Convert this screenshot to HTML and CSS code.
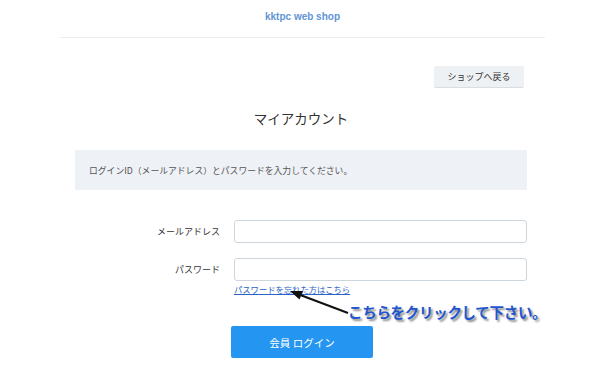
FILE: index.html
```html
<!DOCTYPE html>
<html lang="ja">
<head>
<meta charset="utf-8">
<link rel="stylesheet" href="styles.css">
</head>
<body>
<header class="site-header">
  <a class="shop-name" href="#">kktpc web shop</a>
</header>
<main class="account">
  <div class="back-row">
    <button class="back-btn">ショップへ戻る</button>
  </div>
  <h1 class="title">マイアカウント</h1>
  <div class="notice">ログインID（メールアドレス）とパスワードを入力してください。</div>
  <form class="login-form">
    <div class="row">
      <label class="label">メールアドレス</label>
      <input class="field" type="text">
    </div>
    <div class="row row-pass">
      <label class="label">パスワード</label>
      <div class="field-col">
        <input class="field" type="password">
        <a class="forgot" href="#">パスワードを忘れた方はこちら</a>
      </div>
    </div>
    <div class="submit-row">
      <button class="login-btn" type="button">会員 ログイン</button>
    </div>
  </form>
  <div class="annotation">
    <svg class="arrow" width="64" height="28" viewBox="0 0 64 28">
      <line x1="60" y1="24" x2="11" y2="5.5" stroke="#111" stroke-width="2"/>
      <polygon points="2,2 15,2 11.5,10.5" fill="#111"/>
    </svg>
    <span class="note">こちらをクリックして下さい。</span>
  </div>
</main>
</body>
</html>
```
FILE: styles.css
```css
html, body {
  margin: 0;
  padding: 0;
  background: #fff;
  font-family: "Noto Sans CJK JP", "Noto Sans", sans-serif;
  color: #333;
}
.site-header {
  margin: 0 55px 0 60px;
  height: 37px;
  border-bottom: 1px solid #ececec;
  display: flex;
  align-items: center;
  justify-content: center;
}
.shop-name {
  font-family: "Liberation Sans", Arial, sans-serif;
  font-weight: bold;
  font-size: 10px;
  color: #6294d4;
  text-decoration: none;
  margin-top: -4px;
}
.account {
  position: relative;
  width: 452px;
  margin: 0 0 0 75px;
}
.back-row {
  display: flex;
  justify-content: flex-end;
  padding: 28px 3px 0 0;
}
.back-btn {
  width: 90px;
  height: 22px;
  border: none;
  border-bottom: 1px solid #d9dde2;
  border-radius: 2px;
  background: #eef1f4;
  font-family: inherit;
  font-size: 9px;
  color: #333;
  padding: 0;
}
.title {
  margin: 19px 0 0;
  height: 22px;
  line-height: 22px;
  text-align: center;
  font-size: 13.5px;
  font-weight: normal;
  color: #333;
}
.notice {
  margin-top: 21px;
  height: 40px;
  display: flex;
  align-items: center;
  padding-left: 14px;
  background: #eef1f5;
  font-size: 8.8px;
  color: #555;
}
.login-form {
  margin-top: 30px;
}
.row {
  display: flex;
  align-items: flex-start;
}
.row-pass {
  margin-top: 15px;
}
.label {
  width: 145px;
  height: 23px;
  line-height: 23px;
  text-align: right;
  font-size: 9px;
  color: #333;
  padding-right: 14px;
}
.field-col {
  display: flex;
  flex-direction: column;
  align-items: flex-start;
}
.field {
  box-sizing: border-box;
  width: 293px;
  height: 23px;
  border: 1px solid #cdd6dd;
  border-radius: 3px;
  background: #fff;
  margin: 0;
}
.forgot {
  margin-top: 2px;
  font-size: 8.3px;
  line-height: 12px;
  color: #2a62c8;
  text-decoration: underline;
}
.submit-row {
  margin-top: 31px;
  padding-left: 156px;
}
.login-btn {
  width: 142px;
  height: 32px;
  border: none;
  border-radius: 2px;
  background: #2496f2;
  color: #fff;
  font-family: inherit;
  font-size: 10.5px;
  padding: 0;
}
.annotation {
  position: absolute;
  left: 213px;
  top: 251px;
  display: flex;
  align-items: flex-start;
}
.arrow {
  display: block;
}
.note {
  position: absolute;
  left: 60px;
  top: 12px;
  white-space: nowrap;
  font-size: 14.5px;
  font-weight: bold;
  color: #1f55cf;
  letter-spacing: -0.3px;
  text-shadow: 2px 2px 2px #8a8a8a;
}
```
